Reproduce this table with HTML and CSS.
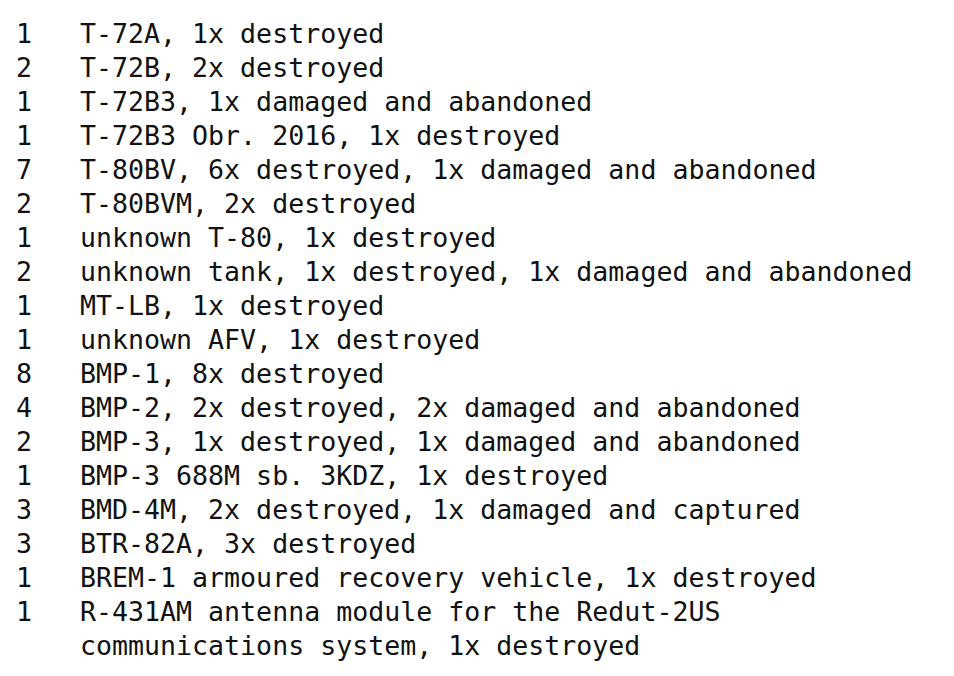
FILE: index.html
```html
<!DOCTYPE html>
<html>
<head>
<meta charset="utf-8">
<link rel="stylesheet" href="styles.css">
</head>
<body>
<ul class="losses">
  <li class="row"><span class="count">1</span><span class="item">T-72A, 1x destroyed</span></li>
  <li class="row"><span class="count">2</span><span class="item">T-72B, 2x destroyed</span></li>
  <li class="row"><span class="count">1</span><span class="item">T-72B3, 1x damaged and abandoned</span></li>
  <li class="row"><span class="count">1</span><span class="item">T-72B3 Obr. 2016, 1x destroyed</span></li>
  <li class="row"><span class="count">7</span><span class="item">T-80BV, 6x destroyed, 1x damaged and abandoned</span></li>
  <li class="row"><span class="count">2</span><span class="item">T-80BVM, 2x destroyed</span></li>
  <li class="row"><span class="count">1</span><span class="item">unknown T-80, 1x destroyed</span></li>
  <li class="row"><span class="count">2</span><span class="item">unknown tank, 1x destroyed, 1x damaged and abandoned</span></li>
  <li class="row"><span class="count">1</span><span class="item">MT-LB, 1x destroyed</span></li>
  <li class="row"><span class="count">1</span><span class="item">unknown AFV, 1x destroyed</span></li>
  <li class="row"><span class="count">8</span><span class="item">BMP-1, 8x destroyed</span></li>
  <li class="row"><span class="count">4</span><span class="item">BMP-2, 2x destroyed, 2x damaged and abandoned</span></li>
  <li class="row"><span class="count">2</span><span class="item">BMP-3, 1x destroyed, 1x damaged and abandoned</span></li>
  <li class="row"><span class="count">1</span><span class="item">BMP-3 688M sb. 3KDZ, 1x destroyed</span></li>
  <li class="row"><span class="count">3</span><span class="item">BMD-4M, 2x destroyed, 1x damaged and captured</span></li>
  <li class="row"><span class="count">3</span><span class="item">BTR-82A, 3x destroyed</span></li>
  <li class="row"><span class="count">1</span><span class="item">BREM-1 armoured recovery vehicle, 1x destroyed</span></li>
  <li class="row"><span class="count">1</span><span class="item">R-431AM antenna module for the Redut-2US communications system, 1x destroyed</span></li>
</ul>
</body>
</html>
```
FILE: styles.css
```css
html, body {
  margin: 0;
  padding: 0;
  background: #ffffff;
}
body {
  font-family: "DejaVu Sans Mono", "Liberation Mono", monospace;
  font-size: 26.6px;
  line-height: 34px;
  color: #111111;
}
.losses {
  list-style: none;
  margin: 0;
  padding: 17px 30px 0 16px;
}
.row {
  display: grid;
  grid-template-columns: 64px 1fr;
}
.count, .item {
  white-space: pre-wrap;
}
```
